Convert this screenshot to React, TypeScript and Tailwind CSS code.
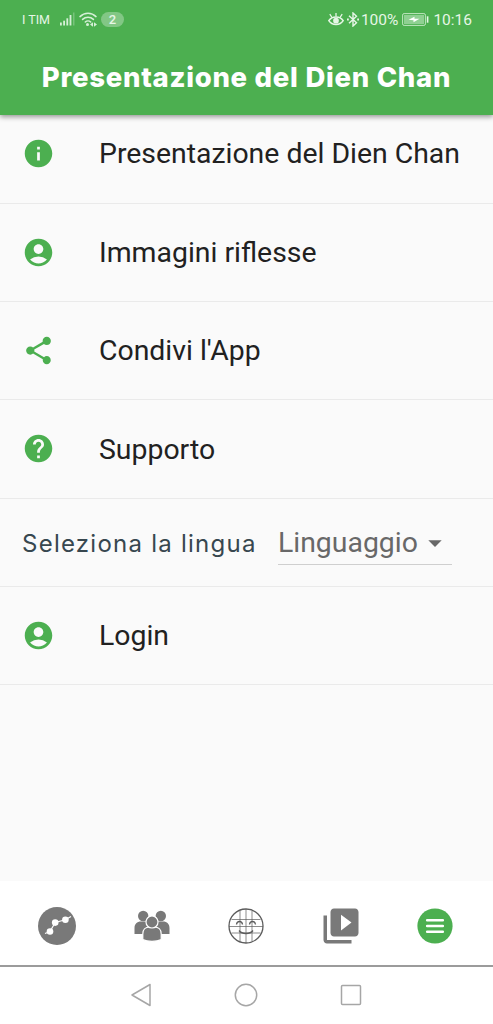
import type { ReactNode } from "react";
import { MdAccountCircle, MdArrowDropDown, MdHelp, MdInfo, MdShare, MdVideoLibrary } from "react-icons/md";

const Signal = () => (
  <svg width="16" height="15" viewBox="0 0 16 15" fill="#d6f0d7">
    <rect x="0" y="10.5" width="1.8" height="3" />
    <rect x="3.2" y="8.7" width="1.8" height="4.8" />
    <rect x="6.4" y="6.3" width="1.8" height="7.2" />
    <rect x="9.6" y="3" width="1.8" height="10.5" />
    <rect x="13.2" y="0.5" width="1.2" height="13" opacity=".4" />
  </svg>
);

const Wifi = () => (
  <svg width="18" height="15" viewBox="0 0 18 15" fill="none" stroke="#d6f0d7" strokeWidth="1.5" strokeLinecap="round">
    <path d="M1 4.6C5.5.2 12.5.2 17 4.6M3.6 7.4c3-3 7.8-3 10.8 0M6.3 10c1.5-1.5 3.9-1.5 5.4 0" />
    <circle cx="8.5" cy="12.6" r="1.5" fill="#d6f0d7" stroke="none" />
    <path d="M11 12.5l3-2.3v4.6zM18 12.5l-3-2.3v4.6z" fill="#d6f0d7" stroke="none" />
  </svg>
);

const Eye = () => (
  <svg width="16" height="15" viewBox="0 0 16 15" fill="none" stroke="#e6f6e6" strokeWidth="1.5">
    <path d="M.8 8.7C4 3.6 12 3.6 15.2 8.7 12 13.8 4 13.8.8 8.7z" />
    <path d="M8 4.5V1M4 5.5L1.8 2.2M12 5.5l2.2-3.3" strokeWidth="1.3" />
    <circle cx="8" cy="8.7" r="2.1" fill="#e6f6e6" />
  </svg>
);

const Bluetooth = () => (
  <svg width="12" height="15" viewBox="0 0 12 15" fill="none" stroke="#e6f6e6" strokeWidth="1.4">
    <path d="M2 3.8l7.5 6.9L6 14V1l3.5 3.3L2 11.2" />
    <path d="M0 7.5h1.8M10.2 7.5H12" strokeWidth="1.8" />
  </svg>
);

const Battery = () => (
  <svg width="27" height="13" viewBox="0 0 27 13">
    <rect x=".6" y=".6" width="22.8" height="11.8" rx="1.5" fill="none" stroke="#c0e6c1" />
    <rect x="2" y="2" width="20" height="9" fill="#8fd092" />
    <path d="M6.5 6.8l6-3v2h5l-6 3.4V7.3z" fill="#fff" />
    <rect x="24.8" y="3.3" width="1.6" height="6.4" fill="#e6f6e6" />
  </svg>
);

const Chart = () => (
  <svg width="38" height="38" viewBox="0 0 38 38">
    <circle cx="19" cy="19" r="19" fill="#797979" />
    <path d="M7 26.5l5-2 5.2-9 10.2-2.7L33 9.5" fill="none" stroke="#fff" strokeWidth="1.2" />
    <circle cx="12" cy="24.5" r="3.3" fill="#fff" />
    <circle cx="17.2" cy="15.6" r="3.3" fill="#fff" />
    <circle cx="27.4" cy="12.8" r="3.3" fill="#fff" />
  </svg>
);

const People = () => (
  <svg width="36" height="32" viewBox="0 0 36 32" fill="#797979">
    <circle cx="9.2" cy="6" r="5.2" />
    <circle cx="26.8" cy="6" r="5.2" />
    <path d="M.5 24v-6c0-4 2.5-6.5 6.5-6.5h5c2 0 4 1 5 2.5V24zM35.5 24v-6c0-4-2.5-6.5-6.5-6.5h-5c-2 0-4 1-5 2.5V24z" />
    <g stroke="#fff" strokeWidth="1.2">
      <path d="M8.8 29.5V24c0-4.3 2.7-7 7-7h4.4c4.3 0 7 2.7 7 7v5.5c-4.5 2.4-13.9 2.4-18.4 0z" />
      <circle cx="18" cy="12" r="6" />
    </g>
  </svg>
);

const Face = () => (
  <svg width="36" height="36" viewBox="0 0 36 36" fill="none" stroke="#5c5c5c">
    <circle cx="18" cy="18" r="17" strokeWidth="1.3" />
    <path d="M12 2.5v31M18 1v34M24 2.5v31M3.5 11.5h29M1 18.5h34M3.5 25h29" strokeWidth=".7" />
    <path d="M8.5 16.5c.5-4 5.5-4 6 0M21.5 16.5c.5-4 5.5-4 6 0M11 22.5c3 4 11 4 14 0" strokeWidth="1.3" />
  </svg>
);

const Row = ({ icon, label, className = "h-[98.4px]" }: { icon: ReactNode; label: string; className?: string }) => (
  <li className={`flex items-center border-b-[1.5px] border-[#eaeaea] pl-[21.5px] text-[#4caf50] ${className}`}>
    {icon}
    <span className="ml-[44.5px] whitespace-nowrap pt-[2px] text-[28.4px] text-[#212121]">{label}</span>
  </li>
);

export default () => (
  <div className="flex h-[1024px] w-[493px] flex-col overflow-hidden bg-[#fafafa] font-['Roboto',sans-serif]">
    <header className="z-10 h-[115px] shrink-0 bg-[#4caf50] text-white shadow-[0_2px_5px_rgba(0,0,0,0.4)]">
      <div className="flex h-[39px] items-center justify-between pl-[22px] pr-[21px] text-[#e6f6e6]">
        <div className="flex items-center">
          <span className="w-[38px] whitespace-nowrap pt-px text-[12.5px]">I TIM</span>
          <Signal />
          <span className="ml-[3px]"><Wifi /></span>
          <span className="ml-[4px] flex h-[15px] w-[23px] items-center justify-center rounded-full bg-[#82c785] text-[13px] font-medium">2</span>
        </div>
        <div className="flex items-center text-[15.5px]">
          <Eye />
          <span className="ml-[3px]"><Bluetooth /></span>
          <span className="ml-[2px] pt-[2px]">100%</span>
          <span className="ml-[4px] mr-[4px]"><Battery /></span>
          <span className="pt-[2px]">10:16</span>
        </div>
      </div>
      <h1 className="flex h-[76px] items-center justify-center whitespace-nowrap pt-[2px] font-['Inter',sans-serif] text-[27.5px] font-extrabold tracking-[0.73px]">Presentazione del Dien Chan</h1>
    </header>
    <ul className="flex-1">
      <Row icon={<MdInfo size={33} />} label="Presentazione del Dien Chan" className="h-[88.5px] pb-[10px]" />
      <Row icon={<MdAccountCircle size={33} />} label="Immagini riflesse" />
      <Row icon={<MdShare size={33} />} label="Condivi l'App" />
      <Row icon={<MdHelp size={33} />} label="Supporto" />
      <li className="flex h-[88px] items-start border-b-[1.5px] border-[#eaeaea] pl-[22px]">
        <label className="mt-[27px] w-[256px] whitespace-nowrap font-['Inter',sans-serif] text-[24px] leading-[36px] tracking-[1.25px] text-[#37474f]">Seleziona la lingua</label>
        <button className="mt-[22px] flex h-[44px] w-[174px] items-center border-b border-[#cfcfcf] pt-[2px] text-[28.4px] text-[#686868]">
          Linguaggio
          <MdArrowDropDown size={32} className="ml-px" />
        </button>
      </li>
      <Row icon={<MdAccountCircle size={33} />} label="Login" />
    </ul>
    <nav className="flex h-[86px] shrink-0 items-center border-b-2 border-[#9b9b9b] bg-white pl-[38px] pt-[5px] text-[#797979]">
      <Chart />
      <span className="ml-[58px]"><People /></span>
      <span className="ml-[58px]"><Face /></span>
      <MdVideoLibrary size={42} className="ml-[56px]" />
      <svg width="36" height="36" viewBox="0 0 36 36" className="ml-[55px]">
        <circle cx="18" cy="18" r="17.6" fill="#4caf50" />
        <path d="M10.2 12.3h15.6M10.2 18h15.6M10.2 23.7h15.6" stroke="#fff" strokeWidth="2.6" strokeLinecap="round" />
      </svg>
    </nav>
    <div className="flex h-[57px] shrink-0 items-center justify-center gap-[82px] bg-white pb-[2px] pr-[2px]">
      <svg width="22" height="24" viewBox="0 0 22 24" fill="none" stroke="#a6a6a6" strokeWidth="1.5" strokeLinejoin="round">
        <path d="M20 1.5v21L2 12z" />
      </svg>
      <svg width="24" height="24" viewBox="0 0 24 24" fill="none" stroke="#a6a6a6" strokeWidth="1.5">
        <circle cx="12" cy="12" r="10.7" />
      </svg>
      <svg width="22" height="22" viewBox="0 0 22 22" fill="none" stroke="#a6a6a6" strokeWidth="1.5">
        <rect x="1.5" y="1.5" width="19" height="19" rx="1" />
      </svg>
    </div>
  </div>
)
